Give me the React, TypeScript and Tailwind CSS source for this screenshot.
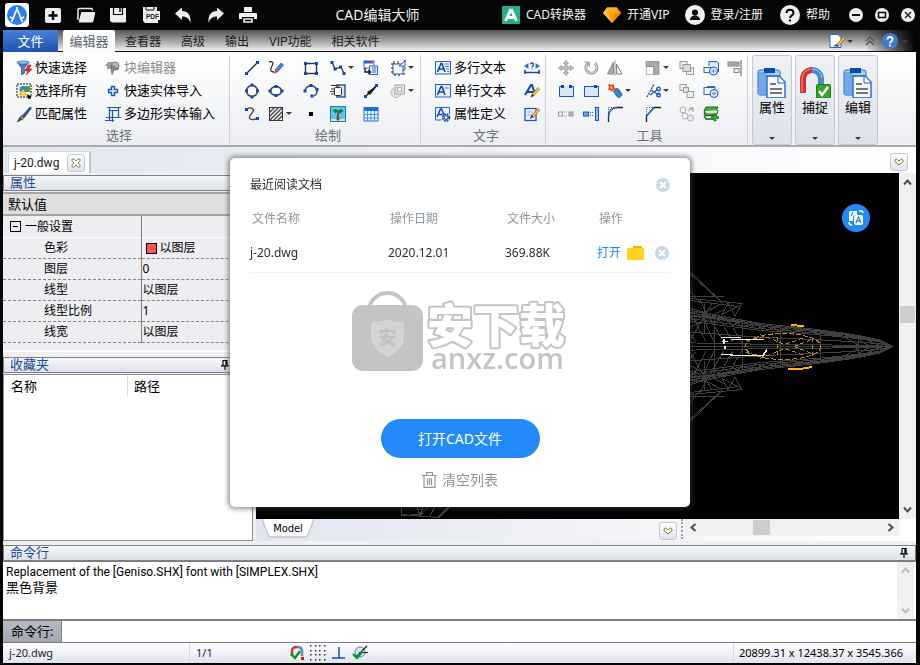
import { useState, type ReactNode } from 'react';

/* ---------- shared drawing helpers ---------- */

function Ic({ children, className = 'h-4 w-4', box = '0 0 16 16' }: { children: ReactNode; className?: string; box?: string }) {
  return (
    <svg viewBox={box} className={`shrink-0 ${className}`} fill="none" aria-hidden="true">
      {children}
    </svg>
  );
}

const BLUE = '#0d47c4';

function Dots({ pts }: { pts: number[][] }) {
  return (
    <>
      {pts.map(([x, y]) => (
        <rect key={`${x}-${y}`} x={x - 1.5} y={y - 1.5} width="3" height="3" fill={BLUE} />
      ))}
    </>
  );
}

const Caret = () => (
  <svg viewBox="0 0 6 3" className="h-[3px] w-[6px] shrink-0" aria-hidden="true">
    <path d="M0 0h6L3 3z" fill="#3c3c3c" />
  </svg>
);

/* ---------- ribbon icons ---------- */

const icons: Record<string, ReactNode> = {
  quickSelect: (
    <>
      <path d="M1 2h12l-4.500 6v5l-3 2V8z" fill="#3b83c4" stroke="#1d5a94" strokeWidth=".7" />
      <ellipse cx="7" cy="2.500" rx="6" ry="1.600" fill="#8cc3ea" stroke="#1d5a94" strokeWidth=".6" />
      <path d="M12 5l-3 6h3l-2 4 6-6h-3l2-4z" fill="#e8252c" stroke="#a11" strokeWidth=".5" />
    </>
  ),
  selectAll: (
    <>
      <rect x="1" y="1" width="14" height="13" stroke="#111" strokeDasharray="2 1" />
      <rect x="7" y="3" width="7" height="6" fill="#3fa535" />
      <circle cx="7" cy="6.500" r="3.500" fill="#2f86d1" />
      <path d="M7 6l4 6H3z" fill="#ffd83c" stroke="#b98e00" strokeWidth=".5" />
      <path d="M11 11l5 3-2 .5 1 1.500-3-.5z" fill="#000" />
    </>
  ),
  matchProps: (
    <>
      <path d="M14 1l1.500 1-6 8-2-1.500z" fill="#2855b5" stroke="#112a66" strokeWidth=".6" />
      <path d="M7.500 8.500l2 1.500-3 3.500L1 16l3-5z" fill="#555" stroke="#222" strokeWidth=".5" />
      <path d="M5 11l2 1.500" stroke="#ddd" />
    </>
  ),
  blockEdit: (
    <>
      <path d="M3 2h6v3H6v4H2V6H0z" fill="#9b9b9b" />
      <circle cx="10" cy="6" r="4" fill="#bcbcbc" stroke="#7c7c7c" />
      <path d="M7 5l7 4-5 1-2 5-1-6z" fill="#8c8c8c" stroke="#6f6f6f" strokeWidth=".6" />
    </>
  ),
  plus: <path d="M6.500 3.500h3v3h3v3h-3v3h-3v-3h-3v-3h3z" fill="#dcebff" stroke="#1857b8" strokeWidth="1.400" />,
  polygonIn: (
    <path d="M2 1.500h14M4 4.500h10M4.500 1v14M13.500 1v11M1 11.500h15M0 14.500h9M7.500 4v12" stroke="#1857c8" strokeWidth="1.200" />
  ),
  line: (
    <>
      <path d="M2.500 13.500l11-11" stroke="#333" strokeWidth="1.400" />
      <Dots pts={[[2.500, 13.500], [13.500, 2.500]]} />
    </>
  ),
  sketch: (
    <>
      <path d="M1 2c4-1 5 1 3 4s-2 6 2 6" stroke="#333" strokeWidth="1.300" />
      <path d="M13 3l2.500 2-6 7-2.500-2z" fill="#4a84e8" stroke="#1b43a8" strokeWidth=".6" />
      <path d="M7 10l2.500 2L6 14z" fill="#e33" />
    </>
  ),
  rect: (
    <>
      <rect x="2.500" y="3.500" width="11" height="10" stroke="#333" strokeWidth="1.400" />
      <Dots pts={[[2.500, 3.500], [13.500, 3.500], [2.500, 13.500], [13.500, 13.500]]} />
    </>
  ),
  polyline: (
    <>
      <path d="M2 2l3 7 6-2 3 6.500" stroke="#333" strokeWidth="1.300" />
      <Dots pts={[[2, 2.500], [5, 9], [10.500, 7], [14, 13.500]]} />
    </>
  ),
  insertBlock: (
    <>
      <rect x="1" y="1" width="10" height="7" fill="#fff" stroke="#2c65c9" />
      <path d="M1 1h9v2.500H1z" fill="#2c65c9" />
      <path d="M8 1h2v2H8z" fill="#e33" />
      <rect x="6.500" y="6" width="8" height="8.500" fill="#e8f1ff" stroke="#2c65c9" />
      <path d="M2 8v4h5M5.500 10l2 2-2 2" stroke="#111" strokeWidth="1.300" />
      <path d="M9 8h4M9 10h4M9 12h4" stroke="#2c65c9" />
    </>
  ),
  boundary: (
    <>
      <rect x="3" y="4" width="10" height="10" stroke="#2560c8" />
      <path d="M1 4h2M1 8h2M1 12h2M5 16v-2M9 16v-2M13 14h2M15 10h-2M4 1v3M8 1v3" stroke="#222" />
      <path d="M9 6l6-5v5z" fill="#fff" stroke="#2560c8" />
      <path d="M14 8h2M14 1l2-1" stroke="#222" />
    </>
  ),
  circle: (
    <>
      <circle cx="8" cy="8" r="5.500" stroke="#444" strokeWidth="1.500" />
      <Dots pts={[[8, 2], [2.500, 8], [13.500, 8], [8, 14]]} />
    </>
  ),
  ellipse: (
    <>
      <ellipse cx="8" cy="8" rx="5.500" ry="4.500" stroke="#444" strokeWidth="1.500" />
      <Dots pts={[[8, 3.500], [2, 8], [14, 8], [8, 12.500]]} />
    </>
  ),
  arc: (
    <>
      <path d="M2 8a6 5.500 0 1 1 9 5" stroke="#444" strokeWidth="1.400" />
      <Dots pts={[[2, 8], [8, 2.500], [14, 6.500], [9, 13]]} />
    </>
  ),
  clip: (
    <>
      <rect x="7" y="2" width="8" height="12" fill="#d8e6fa" stroke="#1b3f8f" strokeWidth="1.300" />
      <rect x="4.500" y="4.500" width="7" height="8" rx="1" fill="#fff" stroke="#333" />
      <path d="M1 2.500h7v2M1 6h4M0 8.500h5M1 11h4" stroke="#333" />
    </>
  ),
  ray: (
    <>
      <path d="M2 14l11-11" stroke="#111" strokeWidth="1.500" />
      <path d="M4 9l3 3 7-9z" fill="#111" />
      <Dots pts={[[2.500, 13.500], [13.500, 2.500]]} />
    </>
  ),
  region: (
    <>
      <circle cx="6" cy="9.500" r="5" fill="#e4e4e4" stroke="#b5b5b5" />
      <rect x="5" y="2" width="9.500" height="9" fill="#e6e6e6" stroke="#a5a5a5" />
      <rect x="7.500" y="4.500" width="4" height="4" fill="#f6f6f6" stroke="#b0b0b0" />
    </>
  ),
  spline: (
    <>
      <path d="M3 3c4-2.500 9 0 5 4s-4 8 4 6" stroke="#444" strokeWidth="1.400" />
      <Dots pts={[[2.500, 3.500], [13.500, 12.500]]} />
    </>
  ),
  hatch: (
    <>
      <rect x="1.500" y="1.500" width="13" height="13" fill="#eee" stroke="#333" />
      <path d="M2 6l4-4M2 10l8-8M2 14L14 2M6 14l8-8M10 14l4-4" stroke="#444" strokeWidth="1.300" />
    </>
  ),
  point: <rect x="6" y="6" width="4" height="4" fill="#000" />,
  image: (
    <>
      <rect x=".5" y=".5" width="15" height="15" fill="#5cc4ee" stroke="#1580b8" />
      <path d="M1 13h14v2H1z" fill="#d8ecc0" />
      <path d="M8 5l-1 9h2z" fill="#7a4a16" stroke="#7a4a16" />
      <path d="M8 5C6 2 3 3 2 6c2-2 3-1 3 2 1-2 2-2 3-2 1 0 2 1 3 2 0-2 1-3 3-2-1-3-4-4-6-1z" fill="#117a2f" />
    </>
  ),
  table: (
    <>
      <rect x="1" y="1.500" width="14" height="13.500" fill="#eaf4ff" stroke="#1c6fd6" />
      <path d="M1 2h14v3H1z" fill="#1c6fd6" />
      <path d="M1 8.500h14M1 12h14M4.500 5v10M8 5v10M11.500 5v10" stroke="#4a90e0" />
    </>
  ),
  mtext: (
    <>
      <rect x=".5" y="1.500" width="15" height="12.500" fill="#eaf3ff" stroke="#2765c4" />
      <path d="M2.500 12L6 3.500h1L10 12M4 9h4.500" stroke="#1547a8" strokeWidth="1.600" />
      <path d="M9.500 4H14M10 6.500h4M11 9h3M12 11.500h2" stroke="#4379cc" />
    </>
  ),
  stext: (
    <>
      <rect x=".5" y="1.500" width="15" height="12.500" fill="#eaf3ff" stroke="#2765c4" />
      <path d="M2.500 12L6 3.500h1L10 12M4 9h4.500" stroke="#1547a8" strokeWidth="1.600" />
      <path d="M9.500 5H14" stroke="#4379cc" />
    </>
  ),
  attr: (
    <>
      <path d="M.5 14V1.500h14V8" fill="#eaf3ff" stroke="#2765c4" />
      <path d="M.5 14H6" stroke="#2765c4" />
      <path d="M2 11l3.500-8h1l3 7M3.500 8.500h4" stroke="#1547a8" strokeWidth="1.500" />
      <circle cx="11" cy="11.500" r="3" fill="#fff" stroke="#2455a5" strokeWidth="2.600" strokeDasharray="1.700 .7" />
      <circle cx="11" cy="11.500" r="1.800" stroke="#2455a5" />
    </>
  ),
  findText: (
    <>
      <path d="M1 12.500h14M1 10v4M15 10v4" stroke="#1547a8" strokeWidth="1.600" />
      <path d="M0 6l4.500-3v6zM16 6l-4.500-3v6z" fill="#2f6fd0" />
      <path d="M6.500 4.500c0-2 3-2 3 0 0 1.500-1.500 1.500-1.500 3M8 8.500v1" stroke="#1547a8" strokeWidth="1.300" />
    </>
  ),
  styleText: (
    <>
      <path d="M1 12L7 2h1l3 9M3.500 9H9" stroke="#1547a8" strokeWidth="2" />
      <path d="M15 5L8 13" stroke="#b07a12" strokeWidth="3" />
      <path d="M15 5L9 12" stroke="#ffd24a" strokeWidth="1.500" />
      <path d="M8.500 11l1.500 1.500L6 15z" fill="#333" />
    </>
  ),
  editText: (
    <>
      <rect x="1" y="2.500" width="11" height="12" fill="#eaf3ff" stroke="#1c56c2" strokeWidth="1.300" />
      <path d="M3 6h6M3 9h5" stroke="#7fa9e4" />
      <path d="M15 3L8 11" stroke="#b5651d" strokeWidth="3" />
      <path d="M15 3L9 10" stroke="#ffcf3f" strokeWidth="1.500" />
      <path d="M7.500 9.500L9 11l-3.500 2z" fill="#222" />
    </>
  ),
  move: (
    <path d="M8 .5l2.500 3H9V7h3.500V5.500l3 2.500-3 2.500V9H9v3.500h1.500L8 15.500l-2.500-3H7V9H3.500v1.500L.5 8l3-2.500V7H7V3.500H5.500z" fill="#c9c9c9" stroke="#8f8f8f" strokeWidth=".8" />
  ),
  rotate: (
    <>
      <path d="M4 4.500a5.500 5.500 0 1 0 8-1" stroke="#8f8f8f" strokeWidth="3" />
      <path d="M4 4.500a5.500 5.500 0 1 0 8-1" stroke="#d6d6d6" strokeWidth="1.300" />
      <path d="M1 1.500h6v6z" fill="#a8a8a8" />
    </>
  ),
  mirror: (
    <>
      <path d="M6.500 2v12H.5z" fill="#aaa" stroke="#888" />
      <path d="M9.500 4v10H15z" fill="#eee" stroke="#888" />
      <path d="M8 0v16" stroke="#888" strokeWidth=".8" />
    </>
  ),
  scale: (
    <>
      <path d="M1 1.500h13v13H9v-8H1z" fill="#aaa" stroke="#999" />
      <rect x="1.500" y="6.500" width="7" height="8" stroke="#777" strokeDasharray="1 1" />
    </>
  ),
  copyGray: (
    <>
      <rect x="1" y="1.500" width="7" height="7" fill="#f1f1f1" stroke="#999" />
      <rect x="7.500" y="8" width="7" height="6.500" fill="#f1f1f1" stroke="#999" />
      <rect x="4" y="4.500" width="7.500" height="7" fill="#dcdcdc" stroke="#999" />
    </>
  ),
  copyGray2: (
    <>
      <rect x="1" y="1.500" width="6" height="6" fill="#f5f5f5" stroke="#999" />
      <rect x="4.500" y="4.500" width="5" height="5" fill="#e4e4e4" stroke="#999" />
      <rect x="8" y="8.500" width="6.500" height="6" fill="#f1f1f1" stroke="#999" />
    </>
  ),
  blockZoom: (
    <>
      <path d="M6 6V1.500h8l1.500 1.500v9" fill="#dbe9ff" stroke="#2c65c9" />
      <rect x="1" y="7.500" width="9" height="5" fill="#f4f9ff" stroke="#2c65c9" />
      <circle cx="10.500" cy="11" r="4" fill="#e0eeff" stroke="#1c56c2" />
      <path d="M8.500 11h4M10.500 9v4" stroke="#4c8ae8" />
    </>
  ),
  blockZoom2: (
    <>
      <path d="M12 3.500H4" stroke="#2c65c9" />
      <rect x="1" y="4.500" width="11" height="7" fill="#f4f9ff" stroke="#2c65c9" />
      <circle cx="11" cy="10.500" r="4" fill="#e0eeff" stroke="#1c56c2" />
      <path d="M9 10.500h4M11 8.500v4" stroke="#4c8ae8" />
    </>
  ),
  align: (
    <>
      <path d="M14 0v16" stroke="#888" strokeWidth="1.400" />
      <rect x="1" y="2" width="11" height="4" fill="#aaa" stroke="#888" />
      <rect x="7" y="8.500" width="5" height="4" fill="#eee" stroke="#888" />
    </>
  ),
  breakAt: (
    <>
      <path d="M4 3.500H1.500v10h14v-10H13" fill="#d7e6fb" stroke="#1c56c2" />
      <path d="M3 2h3v3H3zM11 2h3v3h-3z" fill={BLUE} />
    </>
  ),
  join: (
    <>
      <rect x="1.500" y="3.500" width="14" height="10" fill="#d7e6fb" stroke="#1c56c2" />
      <path d="M11 2h3v3h-3z" fill={BLUE} />
    </>
  ),
  explode: (
    <>
      <path d="M1 1l4 1 2-1v3l2 2-3 1-1 2-2-2-2 0 1-3z" fill="#f0391c" />
      <path d="M3 3l2 .5 1 2-2 .5z" fill="#ffd13a" />
      <rect x="8" y="6" width="5.500" height="9" rx="2" transform="rotate(-35 10 10)" fill="#3d86c9" stroke="#1b4f86" strokeWidth=".7" />
    </>
  ),
  trim: (
    <>
      <path d="M2 14L9 1" stroke="#444" strokeDasharray="2 1" strokeWidth="1.300" />
      <path d="M5 12l8-6M6 7l8 5" stroke="#2560c8" strokeWidth="1.400" />
      <circle cx="13.500" cy="6" r="1.800" stroke="#2560c8" strokeWidth="1.400" />
      <circle cx="13.500" cy="12" r="1.800" stroke="#2560c8" strokeWidth="1.400" />
    </>
  ),
  stretch: (
    <>
      <rect x=".5" y="6" width="4" height="4" stroke="#999" />
      <path d="M6 6h4M6 10h4" stroke="#999" strokeDasharray="1 1" />
      <rect x="11" y="6" width="4" height="4" fill="#bbb" stroke="#999" />
    </>
  ),
  extend: (
    <>
      <rect x=".5" y="6" width="5" height="4" fill="#6ea7ec" stroke="#1c56c2" />
      <path d="M7 6.500h4M7 9.500h4" stroke="#1c56c2" strokeDasharray="1 1" />
      <rect x="12.500" y="1.500" width="3" height="13" fill="#8dbcf5" stroke="#1c56c2" />
    </>
  ),
  fillet: (
    <>
      <path d="M1.500 16V11C1.500 5 5 1.500 10 1.500h6" stroke="#222" strokeWidth="1.300" />
      <path d="M1.500 11C1.500 5 5 1.500 10 1.500" stroke="#2a78d8" strokeWidth="1.600" />
      <path d="M1.500 9V1.500H9" stroke="#333" strokeDasharray="1 1.500" />
    </>
  ),
  chamfer: (
    <>
      <path d="M1.500 16v-6L9 1.500h7" stroke="#222" strokeWidth="1.300" />
      <path d="M1.500 10L9 1.500" stroke="#2a78d8" strokeWidth="1.600" />
      <path d="M1.500 9V1.500H8" stroke="#333" strokeDasharray="1 1.500" />
    </>
  ),
  array: (
    <>
      <circle cx="4" cy="4" r="3" fill="#f3f3f3" stroke="#b0b0b0" />
      <circle cx="6" cy="10" r="3" fill="#f5f5f5" stroke="#b0b0b0" />
      <circle cx="11.500" cy="12" r="3" fill="#eee" stroke="#b0b0b0" />
      <path d="M9 5l5-3v4M14 2h-4" stroke="#b0b0b0" strokeWidth="1.400" />
    </>
  ),
  layers: (
    <>
      <path d="M3 1h12l-2 4H1z" fill="#4aaa4a" stroke="#176117" />
      <path d="M1 6.500l2 3h11M1 9.500l2 3.500h8" stroke="#176117" strokeWidth="1.400" />
      <path d="M1 5l2 3h11l1-4" fill="#c9efc9" stroke="#176117" />
      <path d="M8.500 10.500h2.500V8h2v2.500h2.500v2H13V15h-2v-2.500H8.500z" fill="#36c236" stroke="#0d6d0d" strokeWidth=".7" />
    </>
  ),
};

/* ---------- ribbon parts ---------- */

function Tool({ name, label, caret }: { name: string; label: string; caret?: boolean }) {
  return (
    <button type="button" aria-label={label} className="flex h-[23px] items-center justify-start gap-0.5">
      <Ic>{icons[name]}</Ic>
      {caret && <Caret />}
    </button>
  );
}

function TextTool({ name, text, muted }: { name: string; text: string; muted?: boolean }) {
  return (
    <button type="button" className={`flex h-[23px] items-center gap-[3px] whitespace-nowrap text-[13px] leading-5 ${muted ? 'text-[#8b8b8b]' : 'text-black'}`}>
      <Ic>{icons[name]}</Ic>
      <span className="pb-0.5">{text}</span>
    </button>
  );
}

function Group({ title, className, children }: { title: string; className: string; children: ReactNode }) {
  return (
    <section aria-label={title} className={`flex shrink-0 flex-col border-r border-[#cdd0d6] ${className}`}>
      <div className="pt-px">{children}</div>
      <div className="pl-1.5 text-center text-[13px] leading-5 text-[#6a6f78]">{title}</div>
    </section>
  );
}

const Clipboard = () => (
  <Ic className="h-8 w-8" box="0 0 32 32">
    <rect x="2" y="4" width="22" height="25" rx="2" fill="#a9cdf6" stroke="#2a6cc0" />
    <path d="M2.500 6h8v22h-6a2 2 0 0 1-2-2z" fill="#4c8fdd" opacity=".6" />
    <path d="M8 2h11v5H8z" fill="#1046ae" />
    <path d="M11 10h12l6 6v16H11z" fill="#f4f8ff" stroke="#1d5fc0" strokeWidth="1.300" />
    <path d="M22 10v7h7" fill="#fff" stroke="#1d5fc0" />
    <path d="M14 18h6M14 23h12M14 27h12" stroke="#777" strokeWidth="1.800" />
  </Ic>
);

const Magnet = () => (
  <Ic className="h-8 w-8" box="0 0 32 32">
    <path d="M4 27V13a9 9 0 0 1 9-9" stroke="#d9302c" strokeWidth="6" />
    <path d="M13 4a9 9 0 0 1 9 9v8" stroke="#4a8ad2" strokeWidth="6" />
    <path d="M3 26V13a10 10 0 0 1 9-10" stroke="#f39a94" />
    <path d="M13 3a10 10 0 0 1 10 9" stroke="#a8cdf2" />
    <rect x="17.500" y="18.500" width="14" height="13.500" rx="1" fill="#35a52c" stroke="#1e7c19" />
    <path d="M20 25l3 4 6-8" stroke="#fff" strokeWidth="2.400" />
  </Ic>
);

function BigButton({ icon, text }: { icon: ReactNode; text: string }) {
  return (
    <button type="button" className="flex h-[90px] w-10 shrink-0 flex-col items-center rounded-[3px] border border-[#c3c7d0] bg-linear-to-b from-[#eff1f5] to-[#dde1ea] pt-2.5 text-[13px] leading-[18px] text-black">
      {icon}
      <span>{text}</span>
      <span className="mt-auto flex pb-1"><Caret /></span>
    </button>
  );
}

/* ---------- window chrome ---------- */

const quickButtons: { label: string; art: ReactNode }[] = [
  { label: '新建', art: <><rect x="1" y="2" width="16" height="15" rx="2" fill="#eee" /><path d="M9 5v9M4.500 9.500h9" stroke="#080808" strokeWidth="2.400" /></> },
  { label: '打开', art: <><path d="M1 14V4q0-1.500 1.500-1.500H14q1.500 0 1.500 2" stroke="#eee" strokeWidth="1.500" /><path d="M5 6h12.500q1 0 .8 1l-2 8.500q-.3 1-1.500 1H3q-1.500 0-1-1.500L4 7q.2-1 1-1z" fill="#eee" /></> },
  { label: '保存', art: <><path d="M1 2h16v13.500q0 1-1 1H3L1 15z" fill="#eee" /><path d="M4.500 2v6.500h9V2" stroke="#080808" strokeWidth="1.200" /><path d="M11 2v4" stroke="#080808" strokeWidth="1.500" /></> },
  { label: 'PDF', art: <><path d="M1 1h14v4h3v9h-2v3H3l-2-2z" fill="#eee" /><path d="M4 1v3h8V1" stroke="#080808" /><text x="4" y="13" fontSize="6.500" fontWeight="700" fill="#222" fontFamily="Liberation Sans, sans-serif">PDF</text></> },
  { label: '撤销', art: <path d="M1 7.500L8 1.500V5c6 0 9 4 8.500 12C15 12 12 10.500 8 10.500V14z" fill="#eee" /> },
  { label: '重做', art: <path d="M17 7.500L10 1.500V5C4 5 1 9 1.500 17 3 12 6 10.500 10 10.500V14z" fill="#eee" /> },
  { label: '打印', art: <><path d="M5 1h8v5H5z" fill="#eee" /><path d="M1 7h16q1 0 1 1v5h-3v-2H3v2H0V8q0-1 1-1z" fill="#eee" /><path d="M5 13h8v3H5z" stroke="#eee" strokeWidth="1.600" /></> },
];

function TitleBar() {
  return (
    <header className="flex h-[30px] items-center bg-[#050505] pl-[5px] text-[#f2f2f2]">
      <Ic className="h-6 w-6" box="0 0 24 24">
        <rect width="24" height="24" rx="3" fill="#fff" />
        <circle cx="12" cy="12" r="10" fill="#2c7df0" />
        <path d="M12 4v4M11.500 7L6.500 19M12.500 7l5 12M5 14q2.500 1.500 4 2M19 14q-2.500 1.500-4 2" stroke="#fff" strokeWidth="1.700" />
      </Ic>
      <div className="ml-[15px] flex w-[213px] items-center justify-between">
        {quickButtons.map((b) => (
          <button key={b.label} type="button" aria-label={b.label}>
            <Ic className="h-[18px] w-[18px]" box="0 0 18 18">{b.art}</Ic>
          </button>
        ))}
      </div>
      <h1 className="flex-1 pr-1 text-center text-[14px] leading-5">CAD编辑大师</h1>
      <nav className="flex items-center text-[12px] leading-5">
        <button type="button" className="flex items-center gap-1.5">
          <Ic className="h-[18px] w-[18px]" box="0 0 18 18">
            <rect width="18" height="18" rx="1" fill="#25b08c" />
            <path d="M9 3L3.500 15M9 3l5.500 12M6 11.500h6.500" stroke="#fff" strokeWidth="3" />
          </Ic>
          CAD转换器
        </button>
        <button type="button" className="ml-[17px] flex items-center gap-1.5">
          <Ic className="h-[18px] w-[18px]" box="0 0 18 18">
            <path d="M4 1.500h10L18 7l-9 10L0 7z" fill="#ff9d0a" />
            <path d="M4 1.500L5.500 7 9 17 0 7z" fill="#ffbd3a" />
            <path d="M4 1.500h10L12.500 7h-7z" fill="#ffb019" />
            <path d="M12.500 7L9 17l9-10z" fill="#f08a00" />
          </Ic>
          开通VIP
        </button>
        <button type="button" className="ml-[15px] flex items-center gap-1.5">
          <Ic className="h-5 w-5" box="0 0 20 20">
            <circle cx="10" cy="10" r="10" fill="#eee" />
            <circle cx="10" cy="7.500" r="3" fill="#080808" />
            <path d="M5 15c0-6 10-6 10 0z" fill="#080808" />
          </Ic>
          登录/注册
        </button>
        <button type="button" className="ml-[17px] flex items-center gap-1.5">
          <Ic className="h-5 w-5" box="0 0 20 20">
            <circle cx="10" cy="10" r="10" fill="#eee" />
            <path d="M6.500 8c0-4.500 7-4.500 7 0 0 2.500-3.500 2.500-3.500 5M10 14.500v2" stroke="#080808" strokeWidth="2" />
          </Ic>
          帮助
        </button>
      </nav>
      <div className="ml-[19px] flex gap-3 pr-[5px]">
        <button type="button" aria-label="最小化"><Ic className="h-3.5 w-3.5" box="0 0 14 14"><circle cx="7" cy="7" r="7" fill="#eee" /><path d="M3 7h8" stroke="#080808" strokeWidth="2" /></Ic></button>
        <button type="button" aria-label="最大化"><Ic className="h-3.5 w-3.5" box="0 0 14 14"><circle cx="7" cy="7" r="7" fill="#eee" /><rect x="3.500" y="4.500" width="7" height="5" stroke="#080808" strokeWidth="1.500" /></Ic></button>
        <button type="button" aria-label="关闭"><Ic className="h-3.5 w-3.5" box="0 0 14 14"><circle cx="7" cy="7" r="7" fill="#eee" /><path d="M4 4l6 6M10 4l-6 6" stroke="#333" strokeWidth="1.700" /></Ic></button>
      </div>
    </header>
  );
}

function MenuBar() {
  const tabs = ['查看器', '高级', '输出', 'VIP功能', '相关软件'];
  return (
    <nav className="mr-1 ml-[3px] flex h-[22px] items-stretch bg-linear-to-b from-[#555] to-[#fafafa] text-[12px] leading-5 text-[#1c1c1c] shadow-[inset_0_-1px_0_#111]">
      <button type="button" className="w-[55px] bg-linear-to-b from-[#4680dc] to-[#1d53ac] text-[13px] text-white">文件</button>
      <button type="button" className="ml-[5px] w-[52px] rounded-t-[2px] bg-linear-to-b from-white to-[#fafbfc] text-[13px] text-[#5c6470]">编辑器</button>
      <div className="ml-2.5 flex gap-5 pt-0.5 font-['Roboto','Noto_Sans_CJK_SC',sans-serif]">
        {tabs.map((t) => <button key={t} type="button" className="whitespace-nowrap">{t}</button>)}
      </div>
      <div className="ml-auto flex items-stretch">
        <button type="button" aria-label="样式" className="flex items-center gap-0.5">
          <Ic><path d="M1 1.500h8l3 3v10H1z" fill="#fff" stroke="#2b66c8" /><path d="M15 5l-7 8" stroke="#a46a12" strokeWidth="3" /><path d="M15 5l-6 7" stroke="#ffd24a" strokeWidth="1.500" /><path d="M4 13l4-2 1 3z" fill="#2455a5" /></Ic>
          <Caret />
        </button>
        <div className="ml-3 flex items-center gap-[7px] bg-linear-to-r from-transparent to-black pr-2">
          <button type="button" aria-label="收起">
            <Ic className="h-2.5 w-2.5" box="0 0 10 10"><path d="M1 5l4-4 4 4M1 9l4-4 4 4" stroke="#555" strokeWidth="1.400" /></Ic>
          </button>
          <button type="button" aria-label="帮助菜单" className="flex items-center gap-1">
            <Ic><circle cx="8" cy="8" r="8" fill="#3f7ad2" /><path d="M5.500 6.500c0-3.500 5-3.500 5 0 0 2-2.500 2-2.500 4M8 11.500v2" stroke="#fff" strokeWidth="1.700" /></Ic>
            <Caret />
          </button>
        </div>
      </div>
    </nav>
  );
}

function Ribbon() {
  return (
    <div className="mr-1 ml-[3px] flex h-[95px] overflow-hidden border-b-2 border-[#a9acae] bg-linear-to-b from-white to-[#eceef2] pt-[3px]">
      <Group title="选择" className="w-[227px]">
        <div className="grid grid-cols-[89px_1fr] justify-items-start pl-[13px]">
          <TextTool name="quickSelect" text="快速选择" />
          <TextTool name="blockEdit" text="块编辑器" muted />
          <TextTool name="selectAll" text="选择所有" />
          <TextTool name="plus" text="快速实体导入" />
          <TextTool name="matchProps" text="匹配属性" />
          <TextTool name="polygonIn" text="多边形实体输入" />
        </div>
      </Group>
      <Group title="绘制" className="w-[191px]">
        <div className="grid grid-cols-[24px_35px_27px_33px_27px_24px] pl-3.5">
          <Tool name="line" label="直线" />
          <Tool name="sketch" label="草图" />
          <Tool name="rect" label="矩形" />
          <Tool name="polyline" label="多段线" caret />
          <Tool name="insertBlock" label="插入块" />
          <Tool name="boundary" label="边界" caret />
          <Tool name="circle" label="圆" />
          <Tool name="ellipse" label="椭圆" />
          <Tool name="arc" label="圆弧" />
          <Tool name="clip" label="裁剪" />
          <Tool name="ray" label="射线" />
          <Tool name="region" label="面域" caret />
          <Tool name="spline" label="样条曲线" />
          <Tool name="hatch" label="填充" caret />
          <Tool name="point" label="点" />
          <Tool name="image" label="图像" />
          <Tool name="table" label="表格" />
        </div>
      </Group>
      <Group title="文字" className="w-[125px]">
        <div className="grid grid-cols-[89px_1fr] justify-items-start pl-3.5">
          <TextTool name="mtext" text="多行文本" />
          <Tool name="findText" label="查找文本" />
          <TextTool name="stext" text="单行文本" />
          <Tool name="styleText" label="文本样式" />
          <TextTool name="attr" text="属性定义" />
          <Tool name="editText" label="编辑文本" />
        </div>
      </Group>
      <Group title="工具" className="w-[202px]">
        <div className="grid grid-cols-[25px_24px_38px_34px_24px_24px_16px] pl-3">
          <Tool name="move" label="移动" />
          <Tool name="rotate" label="旋转" />
          <Tool name="mirror" label="镜像" />
          <Tool name="scale" label="缩放" caret />
          <Tool name="copyGray" label="复制" />
          <Tool name="blockZoom" label="编辑块" />
          <Tool name="align" label="对齐" />
          <Tool name="breakAt" label="打断" />
          <Tool name="join" label="合并" />
          <Tool name="explode" label="分解" caret />
          <Tool name="trim" label="修剪" caret />
          <Tool name="copyGray2" label="偏移" />
          <Tool name="blockZoom2" label="查看块" />
          <span />
          <Tool name="stretch" label="拉伸" />
          <Tool name="extend" label="延伸" />
          <Tool name="fillet" label="圆角" />
          <Tool name="chamfer" label="倒角" />
          <Tool name="array" label="阵列" />
          <Tool name="layers" label="图层" />
        </div>
      </Group>
      <div className="flex gap-[3px] pl-1">
        <BigButton icon={<Clipboard />} text="属性" />
        <BigButton icon={<Magnet />} text="捕捉" />
        <BigButton icon={<Clipboard />} text="编辑" />
      </div>
    </div>
  );
}

/* ---------- panels ---------- */

const Pin = () => (
  <Ic className="h-2.5 w-2" box="0 0 8 10">
    <path d="M2 .5h4v5M2 .5v5M0 5.800h8M4 6v4M5 1v4" stroke="#000" strokeWidth="1.200" />
  </Ic>
);

function PanelHeader({ title, pin, closable }: { title: string; pin?: boolean; closable?: boolean }) {
  return (
    <div className="flex h-4 shrink-0 items-center border border-[#7d8088] bg-linear-to-b from-[#f5f7fa] to-[#dde1e8] pr-[7px] pl-1.5">
      <h2 className="mr-auto pb-0.5 text-[13px] leading-3.5 text-[#1f4a97]">{title}</h2>
      {pin && <button type="button" aria-label="固定"><Pin /></button>}
      {closable && (
        <button type="button" aria-label="关闭面板" className="ml-2">
          <Ic className="h-2 w-2" box="0 0 8 8"><path d="M1 1l6 6M7 1L1 7" stroke="#000" strokeWidth="1.500" /></Ic>
        </button>
      )}
    </div>
  );
}

const HeartButton = () => (
  <button type="button" aria-label="更多" className="flex h-[18px] w-[18px] shrink-0 items-center justify-center rounded-[3px] border border-[#c1c7d3] bg-linear-to-b from-white to-[#dfe4ee]">
    <Ic className="h-2 w-2.5" box="0 0 10 8"><path d="M5 7L1 3.500V2L2.500 1 5 3l2.500-2L9 2v1.500z" fill="#fffef0" stroke="#7c7544" /></Ic>
  </button>
);

const properties = [
  ['色彩', '以图层'],
  ['图层', '0'],
  ['线型', '以图层'],
  ['线型比例', '1'],
  ['线宽', '以图层'],
];

function SidePanel() {
  return (
    <aside className="flex w-[250px] shrink-0 flex-col pt-0.5">
      <PanelHeader title="属性" />
      <div className="mt-px h-6 border-y-2 border-[#a5a5a5] bg-[#dfdfdf] pl-[5px] text-[13px] leading-5 text-black">默认值</div>
      <div className="h-[134px] bg-[#eeeef2]">
        <table className="w-full table-fixed border-collapse text-[12px] leading-5 text-black">
          <tbody>
            <tr className="h-[21px] border-b border-white">
              <th scope="colgroup" className="w-[138px] border-r border-[#808080] pl-[7px] text-left font-normal">
                <span className="flex items-center gap-[3px] pt-px">
                  <Ic className="h-3 w-3" box="0 0 12 12"><rect x=".5" y=".5" width="10" height="10" stroke="#000" /><path d="M3 5.500h5" stroke="#000" /></Ic>
                  一般设置
                </span>
              </th>
              <td />
            </tr>
            {properties.map(([k, v]) => (
              <tr key={k} className="h-[21px] border-b border-dashed border-[#858585]">
                <th scope="row" className="border-r border-solid border-r-[#808080] pl-[41px] text-left font-normal">{k}</th>
                <td className="pl-px">
                  <span className="flex items-center gap-[3px]">
                    {k === '色彩' && <span className="ml-[3px] h-[11px] w-[11px] border border-black bg-[#ff5555]" />}
                    {v}
                  </span>
                </td>
              </tr>
            ))}
          </tbody>
        </table>
      </div>
      <div className="h-[7px] border-t-2 border-white bg-[#f0f0f0]" />
      <PanelHeader title="收藏夹" pin closable />
      <div className="mt-px flex-1 border border-[#8a8d94] bg-white">
        <div className="grid grid-cols-[124px_1fr] text-[13px] leading-[22px] text-black">
          <span className="border-r border-[#dedede] pl-[7px]">名称</span>
          <span className="pl-1.5">路径</span>
        </div>
      </div>
    </aside>
  );
}

/* ---------- aircraft wireframe ---------- */

const AXIS = 346;
const half = (x: number) => {
  const t = (893 - x) / 203;
  return t <= 0 ? 0 : 29 * Math.pow(t, 0.55) + (x < 760 ? (760 - x) * 0.1 : 0);
};
const at = (x: number, f: number) => `${x} ${(AXIS + half(x) * f).toFixed(1)}`;

const mesh: string[] = [];
const stations = [620, 640, 660, 680, 696, 706, 714, 724, 733, 742, 756, 768, 780, 792, 806, 820, 832, 846, 858, 868, 880, 893];
[-1, -0.94, -0.88, -0.78, -0.7, -0.4, -0.1, 0, 0.1, 0.4, 0.7, 0.78, 0.88, 0.94, 1].forEach((f) => {
  mesh.push('M' + stations.map((x) => at(x, f)).join('L'));
});
stations.forEach((x, i) => {
  const next = stations[i + 1];
  if (i % 3 === 0) mesh.push(`M${at(x, -1)}L${at(x, 1)}`);
  if (next) {
    [-1, 1].forEach((s) => {
      mesh.push(`M${at(x, s)}L${at(next, s * 0.72)}`);
      mesh.push(`M${at(x, s * 0.75)}L${at(next, s)}`);
      if (x > 840 || x < 740) mesh.push(`M${at(x, s * 0.66)}L${at(next, s * 0.15)}`);
    });
  }
});

const wingHalf = 'M640 222L720 300M650 237L722 302M640 292L690 298L742 303L735 315L728 303L722 314L742 304M690 300L738 306M690 308L724 317L690 316M690 312L730 320L760 323M690 290L700 302M690 320L722 303M700 300L712 322M690 327L724 309M704 303V332M712 303L690 340M640 296H724';

function Canvas() {
  return (
    <div className="relative min-h-0 flex-1 overflow-hidden bg-black">
      <svg viewBox="256 173 643 345" preserveAspectRatio="xMaxYMid meet" className="absolute inset-0 h-full w-full" fill="none" role="img" aria-label="j-20.dwg" shapeRendering="crispEdges">
        <g stroke="#404040">
          <path d={mesh.join('')} />
          <path d={wingHalf} />
          <path d={wingHalf} transform="translate(0 692) scale(1 -1)" />
          <path d="M401 500v14l22 2 16 1 12-12M401 515l20-1 8-9M415 500l5 15 5-15M430 515l8-13M438 517l14-14" />
        </g>
        <g stroke="#b98a32" strokeDasharray="5 2">
          <ellipse cx="783" cy="346" rx="38" ry="13" />
          <path d="M746 340l18-4M746 352l18 4M760 334l25 10 22-8M760 358l25-10 22 8M794 346l20-8M794 346l20 8M812 337v18M777 336v20" strokeDasharray="4 3" />
        </g>
        <path d="M721 337h20M722 341h6M731 339h33M721 354h12M730 355h33l4-6M724 338v5M725 345v3" stroke="#e8e8e8" strokeWidth="1.500" />
        <path d="M791 324l6 1 7 1M788 368.500h12l12-2" stroke="#ffb400" strokeWidth="2" />
      </svg>
      <button type="button" aria-label="翻译" className="absolute top-[31px] right-[29px] flex h-7 w-7 items-center justify-center rounded-full bg-[#248af9]">
        <Ic>
          <path d="M1 3q0-2 2-2h6v4H7q-2 0-2 2v4H1z" fill="#fff" />
          <path d="M6 7q0-2 2-2h5q2 0 2 2v6q0 2-2 2H8q-2 0-2-2z" fill="#fff" />
          <path d="M8 13l2.500-6L13 13M9 11h3M3 6l2-4" stroke="#248af9" strokeWidth="1.300" />
          <path d="M11 1h2q2 0 2 2M1 12q0 3 3 3" stroke="#fff" strokeWidth="1.500" />
        </Ic>
      </button>
    </div>
  );
}

function Chevron({ dir, color = '#505050' }: { dir: 'up' | 'down' | 'left' | 'right'; color?: string }) {
  const d = { up: 'M1 6.500l3.500-4 3.500 4', down: 'M1 2.500l3.500 4 3.500-4', left: 'M6.500 1l-4 3.500 4 3.500', right: 'M2.500 1l4 3.500-4 3.500' }[dir];
  return <Ic className="h-[9px] w-[9px]" box="0 0 9 9"><path d={d} stroke={color} strokeWidth="2" /></Ic>;
}

function Workspace() {
  return (
    <main className="mr-1 ml-[3px] flex min-h-0 flex-1 flex-col bg-[#f0f0f0]">
      <div className="flex h-[26px] shrink-0 items-end justify-between bg-linear-to-r from-[#e1e5ef] to-white pr-2 pl-[5px]">
        <div className="flex h-[22px] items-center gap-2 rounded-t-[2px] border border-b-0 border-[#d5d8de] border-r-2 border-r-[#bfc3ca] bg-white pr-1 pl-[5px] font-['Roboto',sans-serif] text-[12px] leading-5 text-[#222]">
          j-20.dwg
          <button type="button" aria-label="关闭文档" className="flex h-[18px] w-[18px] items-center justify-center rounded-[3px] border border-[#c1c7d3] bg-linear-to-b from-white to-[#dfe4ee]">
            <Ic className="h-2.5 w-2.5" box="0 0 10 10"><path d="M1 1h2l2 2 2-2h2v2L7 5l2 2v2H7L5 7 3 9H1V7l2-2-2-2z" fill="#fff" stroke="#8a8460" /></Ic>
          </button>
        </div>
        <div className="pb-0.5"><HeartButton /></div>
      </div>
      <div className="flex min-h-[368px] flex-1 gap-[3px]">
        <SidePanel />
        <div className="flex min-w-0 flex-1 flex-col">
          <div className="flex min-h-0 flex-1">
            <Canvas />
            <div className="flex w-[17px] flex-col items-center bg-[#f0f0f0] py-[5px]">
              <Chevron dir="up" />
              <span className="mt-[119px] h-[17px] w-[15px] bg-[#cdcdcd]" />
              <span className="mt-auto flex"><Chevron dir="down" /></span>
            </div>
          </div>
          <div className="flex h-[22px] bg-linear-to-r from-[#e1e5ef] to-white">
            <div className="relative ml-1.5 flex h-[19px] w-[52px]">
              <Ic className="h-[19px] w-[52px]" box="0 0 52 19"><path d="M0 0l6 15.500q1 2.500 3 2.500h34q2 0 3-2.500L52 0" fill="#fff" stroke="#bfc4cc" strokeWidth="1.300" /></Ic>
              <button type="button" className="absolute inset-0 font-['DejaVu_Sans_Condensed','DejaVu_Sans',sans-serif] text-[11px] leading-4 text-black">Model</button>
            </div>
            <div className="ml-auto flex items-start">
              <div className="pt-[3px]"><HeartButton /></div>
              <span className="ml-1 h-5 border-l-2 border-dotted border-[#9aa0ad]" />
              <div className="ml-0.5 flex h-[17px] w-[214px] items-center bg-[#f0f0f0] px-1">
                <Chevron dir="left" />
                <span className="ml-[55px] h-[15px] w-[17px] bg-[#cdcdcd]" />
                <span className="ml-auto flex"><Chevron dir="right" /></span>
              </div>
              <span className="w-[17px]" />
            </div>
          </div>
        </div>
      </div>
    </main>
  );
}

/* ---------- command line and status bar ---------- */

function CommandArea() {
  return (
    <section aria-label="命令行" className="mr-1 ml-[3px] bg-[#f0f0f0] pt-1">
      <PanelHeader title="命令行" pin />
      <div className="flex h-[60px] border-t border-b-2 border-[#7d7d7d] bg-white">
        <div className="flex-1 pt-[3px] pl-[3px] text-black">
          <p className="font-['Roboto',sans-serif] text-[12px] leading-[14px]">Replacement of the [Geniso.SHX] font with [SIMPLEX.SHX]</p>
          <p className="text-[13px] leading-4">黑色背景</p>
        </div>
        <div className="mr-0.5 flex w-[17px] flex-col items-center justify-between bg-[#f0f0f0] py-1">
          <Chevron dir="up" color="#bdbdbd" />
          <Chevron dir="down" color="#bdbdbd" />
        </div>
      </div>
      <div className="flex h-[22px] border-b border-[#7d7d7d] bg-white">
        <label htmlFor="command" className="w-[59px] border-r border-[#7d7d7d] bg-linear-to-b from-[#b6bac4] to-[#a2a7b3] pl-2 text-[13px] leading-5 text-black">命令行:</label>
        <input id="command" className="min-w-0 flex-1 bg-white px-1 text-[12px] outline-none" />
      </div>
      <footer className="flex h-5 items-center bg-linear-to-b from-white to-[#dfe4ee] font-['Noto_Sans',sans-serif] text-[11px] leading-5 text-[#1b2333]">
        <span className="w-[187px] border-r border-[#d3d8e3] pl-1.5">j-20.dwg</span>
        <span className="w-[99px] pl-1.5">1/1</span>
        <div className="flex items-center gap-[5px]">
          <button type="button" aria-label="对象捕捉"><Ic><path d="M3 11V6q0-4 5-4" stroke="#d33" strokeWidth="2.600" /><path d="M8 2q5 0 5 4v5" stroke="#6289c9" strokeWidth="2.600" /><path d="M2 9l4 4 5-7" stroke="#0a9a1a" strokeWidth="2.400" /><rect x="12" y="12" width="3" height="3" fill="#d11" /></Ic></button>
          <button type="button" aria-label="栅格"><Ic><g fill="#333">{[0, 5, 9, 14].map((y) => [0, 5, 9, 14].map((x) => <rect key={`${x}-${y}`} x={x} y={y} width="1.500" height="1.500" />))}</g></Ic></button>
          <button type="button" aria-label="正交"><Ic><path d="M8 2v11M1 13h13" stroke="#1c4fb5" strokeWidth="1.500" /></Ic></button>
          <button type="button" aria-label="极轴"><Ic><circle cx="8" cy="7" r="5" fill="#d5e5fa" stroke="#4a80c8" /><path d="M4 12L15 1M7 7.500h9" stroke="#222" strokeWidth="1.200" /><path d="M1 9l4 4 5-6" stroke="#0a9a1a" strokeWidth="2.400" /></Ic></button>
        </div>
        <span className="ml-auto border-l border-[#d3d8e3] pr-[13px] pl-[5px] text-black">20899.31 x 12438.37 x 3545.366</span>
      </footer>
    </section>
  );
}

/* ---------- recent documents dialog ---------- */

const RoundClose = () => (
  <Ic className="h-3.5 w-3.5" box="0 0 14 14">
    <circle cx="7" cy="7" r="7" fill="#c8d8eb" />
    <path d="M4 4l6 6M10 4l-6 6" stroke="#fff" strokeWidth="1.800" />
  </Ic>
);

function RecentDialog({ onClose }: { onClose: () => void }) {
  return (
    <div className="pointer-events-none fixed inset-0 flex items-center justify-center">
      <div role="dialog" aria-labelledby="recent-title" className="pointer-events-auto flex w-[460px] flex-col rounded-[5px] bg-white px-5 pt-[17px] pb-[17px] shadow-[0_0_5px_2px_rgba(60,60,60,0.55)]">
        <div className="flex h-5 items-center justify-between">
          <h2 id="recent-title" className="text-[12px] leading-5 text-[#2b2f36]">最近阅读文档</h2>
          <button type="button" aria-label="关闭" onClick={onClose}><RoundClose /></button>
        </div>
        <table className="mt-2 w-full table-fixed text-left text-[12px] leading-5">
          <thead>
            <tr className="h-[33px] text-[#8d979f]">
              <th className="w-[138px] pl-0.5 font-normal">文件名称</th>
              <th className="w-[117px] pl-0.5 font-normal">操作日期</th>
              <th className="w-[92px] pl-0.5 font-normal">文件大小</th>
              <th className="pl-0.5 font-normal">操作</th>
            </tr>
          </thead>
          <tbody className="[&_td]:pb-0.5">
            <tr className="h-[37px] border-b border-[#f2f2f2] text-[#2b2f36]">
              <td>j-20.dwg</td>
              <td>2020.12.01</td>
              <td>369.88K</td>
              <td>
                <span className="flex items-center">
                  <a href="#open" className="text-[#248af9]">打开</a>
                  <button type="button" aria-label="打开文件夹" className="ml-1.5">
                    <Ic className="h-3.5 w-[17px]" box="0 0 17 14"><path d="M6 1q0-1 1-1h7q1 0 1 1v3H6z" fill="#f2b705" /><rect y="2" width="17" height="12" rx="1" fill="#ffd21e" /></Ic>
                  </button>
                  <button type="button" aria-label="移除" className="ml-[11px]"><RoundClose /></button>
                </span>
              </td>
            </tr>
          </tbody>
        </table>
        <div className="mt-[18px] ml-[102px] flex h-20 items-end gap-1 text-[#c4c4c4]">
          <svg viewBox="0 0 71 80" className="h-20 w-[71px] shrink-0" fill="none" aria-hidden="true">
            <path d="M17 17C22-3 49-3 54 17" stroke="#c4c4c4" strokeWidth="4" />
            <rect y="14" width="71" height="66" rx="11" fill="#c4c4c4" />
            <path d="M20 32q9 0 15.500-3 6.500 3 15.500 3v14q0 12-15.500 19Q20 58 20 46z" fill="#d3d3d2" stroke="#dcdcdc" />
            <text x="35.500" y="53" textAnchor="middle" fontSize="18" fontWeight="700" fill="#c0c0c0" fontFamily="Noto Sans CJK SC, sans-serif">安</text>
          </svg>
          <svg viewBox="0 0 140 72" className="h-[72px] w-[140px] shrink-0 overflow-visible">
            <text x="0" y="43" fontSize="46" fontWeight="900" fill="#fff" stroke="#c4c4c4" strokeWidth="4" strokeLinejoin="round" paintOrder="stroke" fontFamily="Liberation Sans, Noto Sans CJK SC, sans-serif">安下载</text>
            <text x="4" y="70" fontSize="29" fontWeight="600" fill="#c4c4c4" fontFamily="Open Sans, Noto Sans, sans-serif">anxz.com</text>
          </svg>
        </div>
        <button type="button" className="mx-auto mt-12 h-[39px] w-[159px] rounded-full bg-[#248af9] text-[14px] leading-5 text-white">打开CAD文件</button>
        <button type="button" className="mx-auto mt-3 flex items-center gap-[5px] text-[14px] leading-5 text-[#8d979f]">
          <Ic className="h-4 w-[15px]" box="0 0 15 16"><path d="M0 3.500h15M4.500 3V.7h6V3M2 4v11.300h11V4M5.500 6v7M7.500 6v7M9.500 6v7" stroke="#8d979f" strokeWidth="1.200" /></Ic>
          清空列表
        </button>
      </div>
    </div>
  );
}

export default function App() {
  const [dialogOpen, setDialogOpen] = useState(true);
  return (
    <div className="flex min-h-screen flex-col bg-[#050505] pb-[2px] font-['Noto_Sans','Noto_Sans_CJK_SC',sans-serif]">
      <TitleBar />
      <MenuBar />
      <Ribbon />
      <Workspace />
      <CommandArea />
      {dialogOpen && <RecentDialog onClose={() => setDialogOpen(false)} />}
    </div>
  );
}
